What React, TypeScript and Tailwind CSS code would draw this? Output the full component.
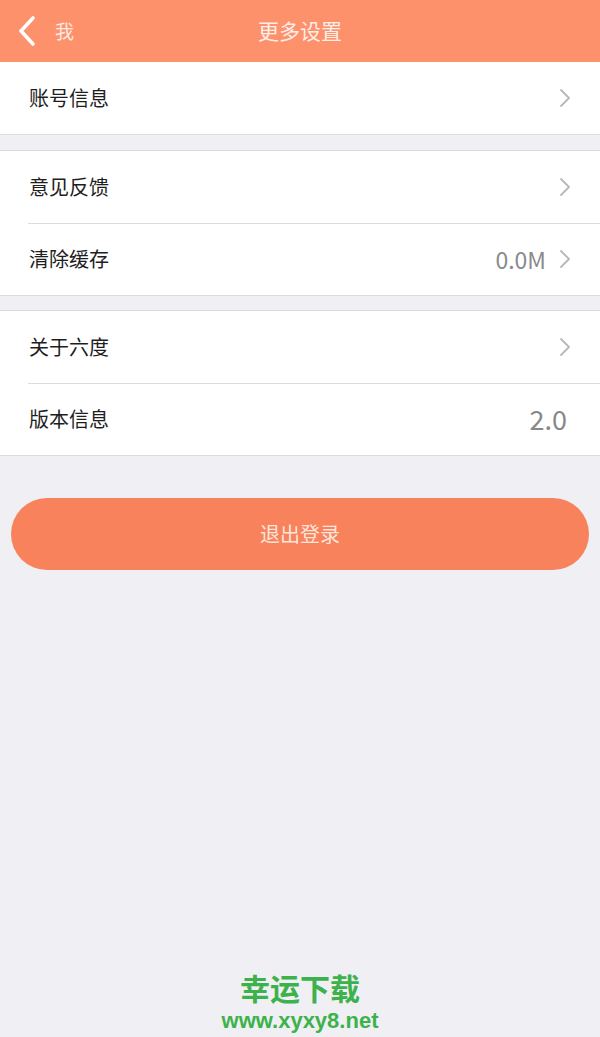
import React from "react";

const font = { fontFamily: '"Noto Sans CJK SC", "Noto Sans", sans-serif' };

function Chevron() {
  return (
    <svg width="14" height="22" viewBox="0 0 14 22" className="shrink-0">
      <path d="M3 3 L11 11 L3 19" fill="none" stroke="#b8b8bc" strokeWidth="1.8" strokeLinecap="round" strokeLinejoin="round" />
    </svg>
  );
}

function Row({ label, value, valueClass, arrow = true, sep = false }: { label: string; value?: string; valueClass?: string; arrow?: boolean; sep?: boolean }) {
  return (
    <div className="relative flex h-[72px] items-center pl-[29px] pr-[28px]">
      {sep && <div className="absolute left-[28px] right-0 top-0 h-px bg-[#dcdcdf]" />}
      <span className="flex-1 text-[20px] text-[#1e1e1e]">{label}</span>
      {value && <span className={valueClass}>{value}</span>}
      {arrow && <span className="ml-[12px]"><Chevron /></span>}
    </div>
  );
}

export default function App() {
  return (
    <div className="relative flex h-[1037px] w-[600px] flex-col overflow-hidden bg-[#efeff4]" style={font}>
      <div className="relative flex h-[62px] items-center justify-center bg-[#fd916c]">
        <div className="absolute left-[16px] top-0 flex h-full items-center">
          <svg width="22" height="32" viewBox="0 0 22 32">
            <path d="M17 3 L5 16 L17 29" fill="none" stroke="#ffffff" strokeWidth="3.6" strokeLinecap="round" strokeLinejoin="round" />
          </svg>
          <span className="ml-[17px] text-[19px] text-[#fbe9e2]">我</span>
        </div>
        <span className="text-[21px] text-[#fdeee8]">更多设置</span>
      </div>

      <div className="border-b border-[#dcdcdf] bg-white">
        <Row label="账号信息" />
      </div>

      <div className="mt-[15px] border-y border-[#dcdcdf] bg-white">
        <Row label="意见反馈" />
        <Row label="清除缓存" value="0.0M" valueClass="text-[23px] text-[#8a8a8a]" sep />
      </div>

      <div className="mt-[14px] border-y border-[#dcdcdf] bg-white">
        <Row label="关于六度" />
        <Row label="版本信息" value="2.0" valueClass="mr-[5px] text-[27px] text-[#888888]" arrow={false} sep />
      </div>

      <div className="mt-[42px] px-[11px]">
        <button className="flex h-[72px] w-full items-center justify-center rounded-full bg-[#f7825c] text-[20px] text-[#fde5db]">
          退出登录
        </button>
      </div>

      <div className="mt-auto mb-[5px] flex flex-col items-center">
        <span className="block h-[32px] text-[30px] font-bold leading-[32px] text-[#3db24c]">幸运下载</span>
        <span className="mt-[7px] block h-[22px] text-[22px] font-bold leading-[22px] text-[#3db24c]" style={{ fontFamily: '"Liberation Sans", Arial, sans-serif' }}>www.xyxy8.net</span>
      </div>
    </div>
  );
}
